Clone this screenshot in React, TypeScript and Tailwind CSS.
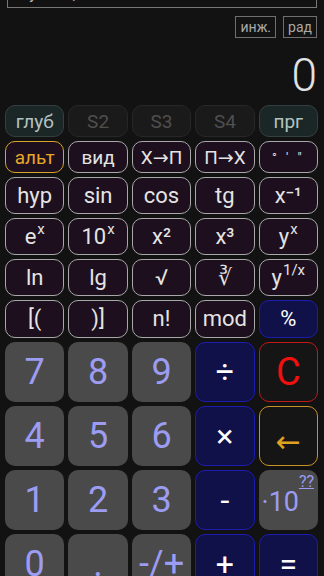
import React from 'react'

type Kind = 'teal' | 'dim' | 'fn' | 'alt' | 'op' | 'digit' | 'clear' | 'back'

const kinds: Record<Kind, string> = {
    teal: 'bg-[#1b2626] border border-[#34403f] text-[#b3c2c0] text-[19px]',
    dim: 'bg-[#1a1a1a] border border-[#272727] text-[#4f4f4f] text-[19px]',
    fn: 'bg-[#1d0f1d] border-[1.5px] border-[#a8a8a8] text-[#e4e4e4] text-[22px]',
    alt: 'bg-[#1d0f1d] border-[1.5px] border-[#d9a22a] text-[#e6a828] text-[19px]',
    op: 'bg-[#11114a] border-[1.5px] border-[#1c1cae] text-white text-[32px]',
    digit: 'bg-[#4a4a4a] text-[#9c9cf2] text-[36px]',
    clear: 'bg-[#151515] border-[1.5px] border-[#c01a1a] text-[#f01010] text-[38px]',
    back: 'bg-[#151515] border-[1.5px] border-[#c99224] text-[#e0a020] text-[30px]',
}

function Key({ kind, children, small }: { kind: Kind; children: React.ReactNode; small?: boolean }) {
    return (
        <div className={`flex items-center justify-center rounded-[10px] leading-none ${kinds[kind]} ${small ? '!text-[19px]' : ''}`}>
            {children}
        </div>
    )
}

const Sup = ({ children }: { children: React.ReactNode }) => (
    <span className="text-[15px] relative -top-[7px] ml-[1px]">{children}</span>
)

export default function App() {
    return (
        <div className="w-[324px] h-[576px] overflow-hidden bg-[#121212]" style={{ fontFamily: 'Roboto, "DejaVu Sans", sans-serif' }}>
            {/* expression box, scrolled off the top */}
            <div className="mx-[7px] -mt-[14px] h-[22px] border border-[#777] px-[5px] text-[16px] leading-[14px] text-[#bbb]">
                Глубина, ...
            </div>

            <div className="flex justify-end gap-[7px] pr-[7px] mt-[8px]">
                <div className="h-[22px] px-[4px] border border-[#6f6f6f] text-[#a8a8a8] text-[14px] leading-[20px]">инж.</div>
                <div className="h-[22px] px-[4px] border border-[#6f6f6f] text-[#a8a8a8] text-[14px] leading-[20px]">рад</div>
            </div>

            <div className="flex justify-end pr-[7px] mt-[8px] h-[59px] text-[46px] font-light leading-[59px] text-[#e2e2e2]">0</div>

            <div className="grid grid-cols-5 gap-[4px] pl-[5px] pr-[6px] grid-rows-[32px_32px_37px_37px_37px_38px_60px_60px_60px_60px]">
                <Key kind="teal">глуб</Key>
                <Key kind="dim">S2</Key>
                <Key kind="dim">S3</Key>
                <Key kind="dim">S4</Key>
                <Key kind="teal">прг</Key>

                <Key kind="alt">альт</Key>
                <Key kind="fn" small>вид</Key>
                <Key kind="fn" small>X→П</Key>
                <Key kind="fn" small>П→X</Key>
                <Key kind="fn"><span className="text-[13px] tracking-[3px]">° ' "</span></Key>

                <Key kind="fn">hyp</Key>
                <Key kind="fn">sin</Key>
                <Key kind="fn">cos</Key>
                <Key kind="fn">tg</Key>
                <Key kind="fn">x⁻¹</Key>

                <Key kind="fn">e<Sup>x</Sup></Key>
                <Key kind="fn">10<Sup>x</Sup></Key>
                <Key kind="fn">x²</Key>
                <Key kind="fn">x³</Key>
                <Key kind="fn">y<Sup>x</Sup></Key>

                <Key kind="fn">ln</Key>
                <Key kind="fn">lg</Key>
                <Key kind="fn">√</Key>
                <Key kind="fn">∛</Key>
                <Key kind="fn">y<Sup>1/x</Sup></Key>

                <Key kind="fn">[(</Key>
                <Key kind="fn">)]</Key>
                <Key kind="fn">n!</Key>
                <Key kind="fn">mod</Key>
                <div className="flex items-center justify-center rounded-[10px] leading-none bg-[#11114a] border-[1.5px] border-[#1c1cae] text-white text-[22px]">%</div>

                <Key kind="digit">7</Key>
                <Key kind="digit">8</Key>
                <Key kind="digit">9</Key>
                <Key kind="op">÷</Key>
                <Key kind="clear">C</Key>

                <Key kind="digit">4</Key>
                <Key kind="digit">5</Key>
                <Key kind="digit">6</Key>
                <Key kind="op">×</Key>
                <Key kind="back"><span className="mt-[12px]">←</span></Key>

                <Key kind="digit">1</Key>
                <Key kind="digit">2</Key>
                <Key kind="digit">3</Key>
                <Key kind="op">-</Key>
                <div className="relative flex items-end justify-start rounded-[10px] leading-none bg-[#4a4a4a] text-[#9c9cf2] pl-[3px] pb-[14px]">
                    <span className="text-[27px]">·10</span>
                    <span className="absolute top-[4px] right-[4px] text-[16px] leading-none underline">??</span>
                </div>

                <Key kind="digit">0</Key>
                <Key kind="digit">.</Key>
                <Key kind="digit">-/+</Key>
                <Key kind="op">+</Key>
                <Key kind="op">=</Key>
            </div>
        </div>
    )
}
